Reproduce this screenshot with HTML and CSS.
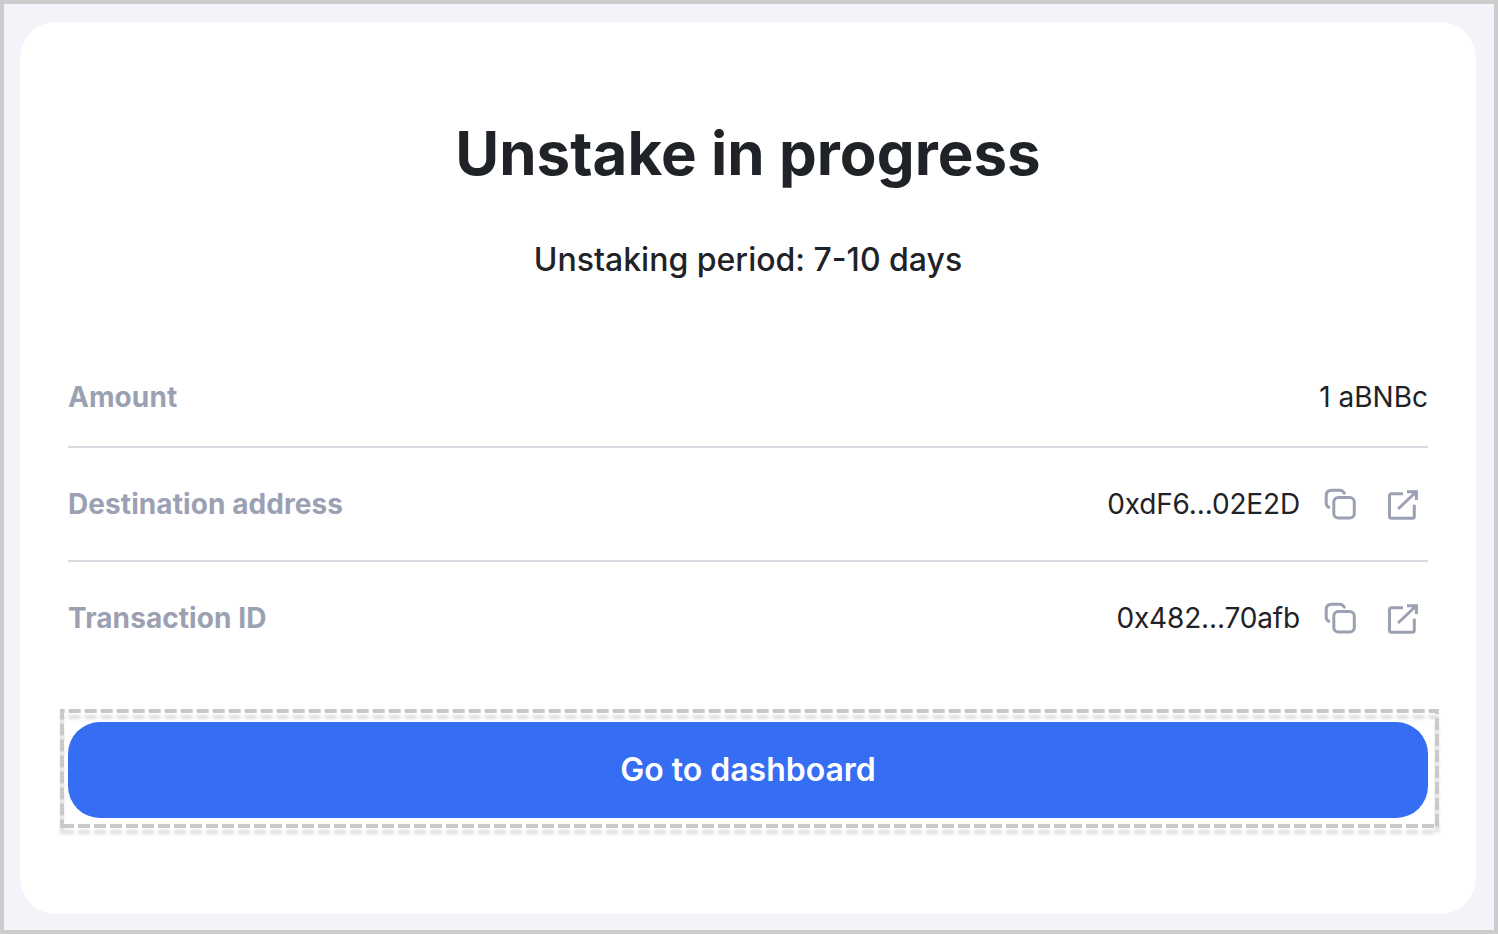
FILE: index.html
```html
<!DOCTYPE html>
<html lang="en">
<head>
<meta charset="utf-8">
<title>Unstake in progress</title>
<link rel="stylesheet" href="styles.css">
</head>
<body>
<svg class="sprite" width="0" height="0" aria-hidden="true">
  <symbol id="copy" viewBox="0 0 36 36">
    <rect x="9.800" y="11.500" width="20.500" height="20.500" rx="4.500"/>
    <path d="M4.800 21.300 Q2.200 20 2.200 17 V9.700 Q2.200 4.200 7.700 4.200 H15.500 Q18.800 4.200 20.300 7.200"/>
  </symbol>
  <symbol id="external" viewBox="0 0 36 36">
    <path d="M17 7.700 H5.500 Q3.500 7.700 3.500 9.700 V30.200 Q3.500 32.200 5.500 32.200 H26.300 Q28.300 32.200 28.300 30.200 V18.700"/>
    <path d="M12 23 L30 6 M21 5.700 H30.400 V14"/>
  </symbol>
</svg>
<main class="card">
  <h1 class="title">Unstake in progress</h1>
  <p class="period">Unstaking period: 7-10 days</p>
  <dl class="details">
    <div class="row row-amount"><dt class="label">Amount</dt><dd class="value">1 aBNBc</dd></div>
    <div class="row"><dt class="label">Destination address</dt><dd class="value"><span class="hash">0xdF6...02E2D</span><svg class="icon copy"><use href="#copy"/></svg><svg class="icon external"><use href="#external"/></svg></dd></div>
    <div class="row"><dt class="label">Transaction ID</dt><dd class="value"><span class="hash">0x482...70afb</span><svg class="icon copy"><use href="#copy"/></svg><svg class="icon external"><use href="#external"/></svg></dd></div>
  </dl>
  <div class="focus-frame">
    <svg class="dashes" viewBox="0 0 1379 119" aria-hidden="true">
      <path d="M0 2 H1379" stroke-dashoffset="7.300"/>
      <path d="M1377 0 V119" stroke-dashoffset="7"/>
      <path d="M2 117 H1379"/>
      <path d="M2 0 V119" stroke-dashoffset="1.500"/>
    </svg>
    <button class="button">Go to dashboard</button>
  </div>
</main>
</body>
</html>
```
FILE: styles.css
```css
* { box-sizing: border-box; }
body {
  margin: 0;
  height: 934px;
  padding: 18px 18px 16px 16px;
  border: 4px solid #ccc;
  background: #f3f4fa;
  color: #1f2226;
  font-family: Inter, sans-serif;
}
.sprite { position: absolute; }
.card {
  height: 892px;
  padding: 95px 48px 0;
  border-radius: 36px;
  background: #fff;
}
.title { margin: 0; font-size: 60px; line-height: 72px; font-weight: 700; letter-spacing: 0.05px; text-align: center; }
.period { margin: 47px 0 0; font-size: 32px; line-height: 48px; font-weight: 500; text-align: center; }
.details { margin: 64px 0 0; }
.row {
  display: flex;
  align-items: center;
  justify-content: space-between;
  height: 114px;
  border-bottom: 2px solid #d7dae1;
}
.row-amount { height: 100px; }
.row:last-child { border-bottom-color: transparent; }
.label { color: #9ba1b2; font-size: 28px; font-weight: 700; letter-spacing: 0.08px; }
.value { display: flex; align-items: center; margin: 0; font-size: 28px; }
.hash { letter-spacing: -0.15px; }
.icon { width: 36px; height: 36px; fill: none; stroke: #9ba1b2; stroke-width: 3; }
.copy { margin-left: 24px; stroke-linecap: round; }
.external { margin: 0 6px 0 26px; }
.focus-frame {
  position: relative;
  margin: 33px -11px 0 -8px;
  height: 119px;
  padding: 13px 11px 10px 8px;
}
.dashes {
  position: absolute;
  inset: 0;
  width: 1379px;
  height: 119px;
  overflow: visible;
  fill: none;
  stroke: #c9c9c9;
  stroke-width: 4;
  stroke-dasharray: 12 4;
  filter: drop-shadow(0 6px 1.5px rgba(0, 0, 0, 0.13));
}
.button {
  position: relative;
  display: block;
  width: 100%;
  height: 96px;
  border: 0;
  border-radius: 32px;
  background: #356df3;
  color: #fff;
  font: 600 32px/48px Inter, sans-serif;
}
```
